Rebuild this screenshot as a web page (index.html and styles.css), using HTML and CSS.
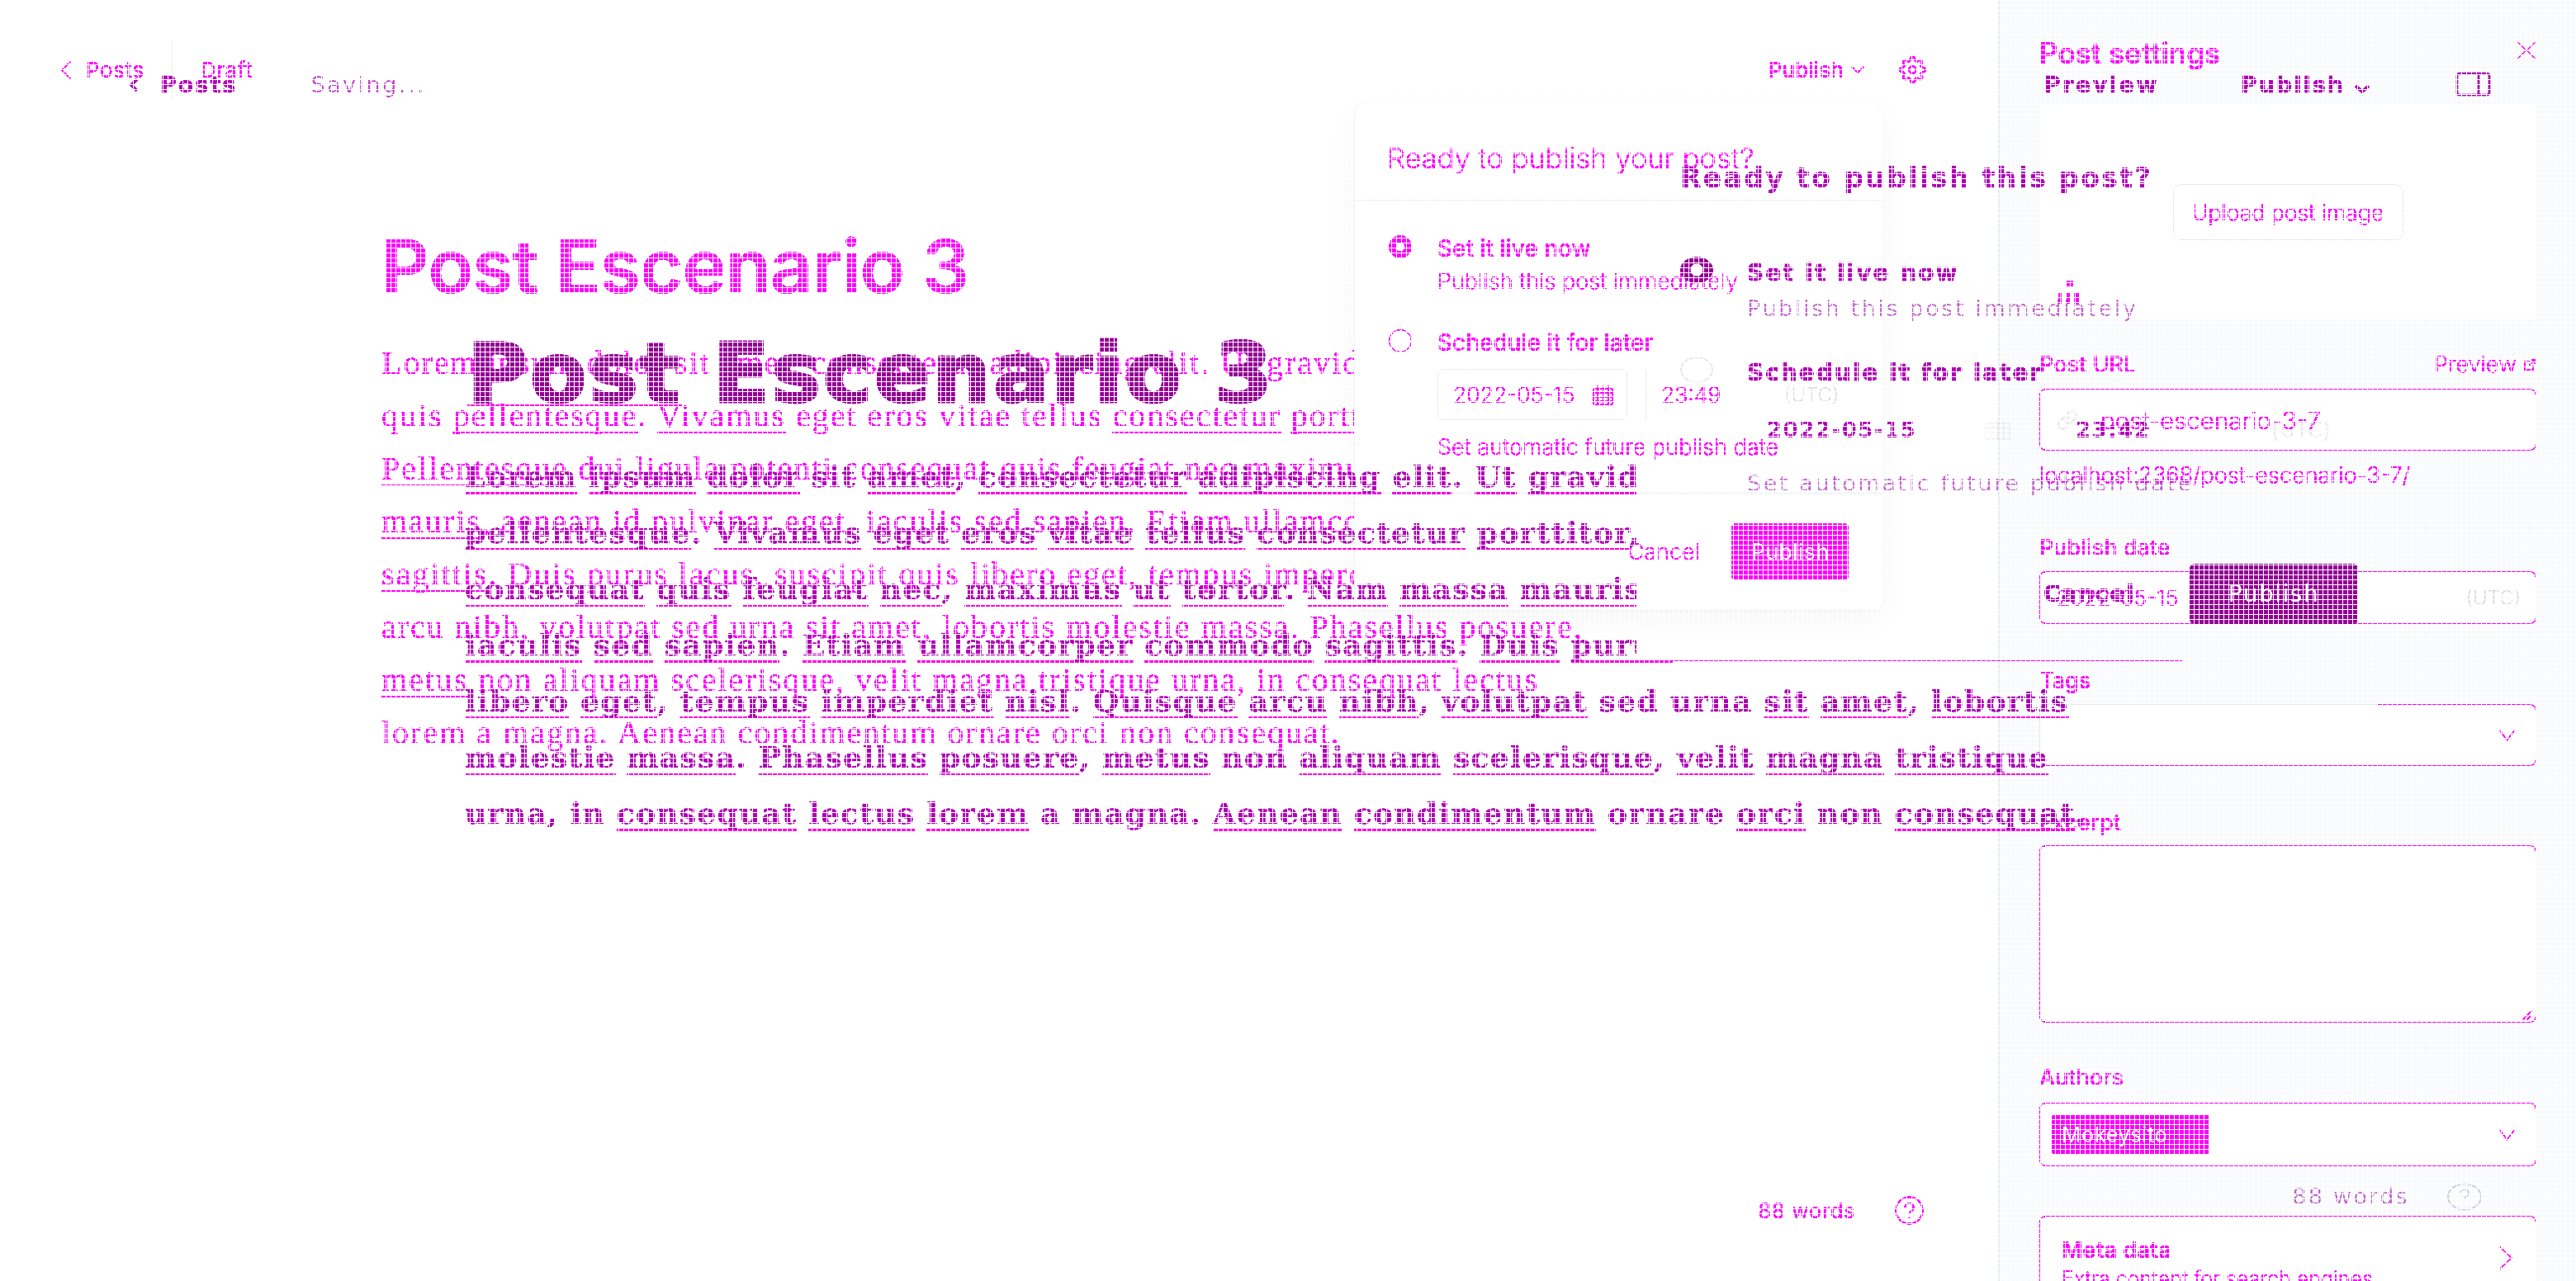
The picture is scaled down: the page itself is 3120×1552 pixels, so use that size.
FILE: index.html
```html
<!DOCTYPE html>
<html lang="en">
<head>
<meta charset="utf-8">
<title>Post Escenario 3</title>
<link rel="stylesheet" href="styles.css">
</head>
<body>
<div class="stage">

  <!-- first capture: magenta -->
  <div class="shot shot-a">
    <main class="a-main">
      <header class="a-top">
        <svg class="a-back" viewBox="0 0 13 22"><path d="M12 1 2 11l10 10"/></svg>
        <span class="a-crumb">Posts</span>
        <span class="a-rule"></span>
        <span class="a-crumb">Draft</span>
        <span class="a-actions">
          <span class="a-publish">Publish</span>
          <svg class="a-caret" viewBox="0 0 16 9"><path d="M1 1l7 7 7-7"/></svg>
          <svg class="a-gear" viewBox="0 0 24 24"><circle cx="12" cy="12" r="3"/><path d="M19.4 15a1.65 1.65 0 0 0 .33 1.82l.06.06a2 2 0 0 1-2.83 2.83l-.06-.06a1.65 1.65 0 0 0-1.82-.33 1.65 1.65 0 0 0-1 1.51V21a2 2 0 0 1-4 0v-.09A1.65 1.65 0 0 0 9 19.4a1.65 1.65 0 0 0-1.82.33l-.06.06a2 2 0 0 1-2.83-2.83l.06-.06a1.65 1.65 0 0 0 .33-1.82 1.65 1.65 0 0 0-1.51-1H3a2 2 0 0 1 0-4h.09A1.65 1.65 0 0 0 4.6 9a1.65 1.65 0 0 0-.33-1.82l-.06-.06a2 2 0 0 1 2.83-2.83l.06.06a1.65 1.65 0 0 0 1.82.33H9a1.65 1.65 0 0 0 1-1.51V3a2 2 0 0 1 4 0v.09a1.65 1.65 0 0 0 1 1.51 1.65 1.65 0 0 0 1.82-.33l.06-.06a2 2 0 0 1 2.83 2.83l-.06.06a1.65 1.65 0 0 0-.33 1.82V9a1.65 1.65 0 0 0 1.51 1H21a2 2 0 0 1 0 4h-.09a1.65 1.65 0 0 0-1.51 1z"/></svg>
        </span>
      </header>
      <article class="a-doc">
        <h1 class="a-title">Post Escenario 3</h1>
        <div class="a-body">
          <div class="line">Lorem ipsum dolor sit amet, consectetur adipiscing elit. Ut gravida nulla</div>
          <div class="line">quis <u>pellentesque</u>. <u>Vivamus</u> eget eros vitae tellus <u>consectetur</u> <u>porttitor</u>, nunc</div>
          <div class="line"><u>Pellentesque</u> dui ligula potenti consequat quis feugiat nec maximus ut</div>
          <div class="line"><u>mauris</u>, aenean id pulvinar eget, iaculis sed sapien. Etiam ullamcorper nunc</div>
          <div class="line"><u>sagittis</u>. Duis purus lacus, suscipit quis libero eget, tempus imperdiet nisl</div>
          <div class="line">arcu nibh, volutpat sed urna sit amet, lobortis molestie massa. Phasellus posuere,</div>
          <div class="line"><u>metus</u> non aliquam scelerisque, velit magna tristique urna, in consequat lectus</div>
          <div class="line">lorem a magna. Aenean condimentum ornare orci non consequat.</div>
        </div>
      </article>
      <footer class="a-foot">
        <span>88 words</span>
        <svg class="a-help" viewBox="0 0 24 24"><circle cx="12" cy="12" r="11"/><path d="M8.5 9.5a3.5 3.5 0 1 1 5 3.2c-1 .5-1.5 1.2-1.5 2.3M12 18v.5"/></svg>
      </footer>

      <section class="a-pop">
        <div class="a-pop-head">Ready to publish your post?</div>
        <div class="a-pop-body">
          <div class="a-opt">
            <span class="a-radio a-radio-on"></span>
            <div>
              <div class="a-opt-name">Set it live now</div>
              <div class="a-opt-note">Publish this post immediately</div>
            </div>
          </div>
          <div class="a-opt a-opt-later">
            <span class="a-radio"></span>
            <div>
              <div class="a-opt-name">Schedule it for later</div>
              <div class="a-when">
                <span class="a-date">2022-05-15
                  <svg class="a-cal" viewBox="0 0 25 25"><path d="M1 5h23v19H1zM1 10h23M1 15h23M1 20h23M6 1v23M12.500 1v23M19 1v23"/></svg>
                </span>
                <span class="a-time">23:49</span>
                <span class="a-utc">(UTC)</span>
              </div>
              <div class="a-opt-note">Set automatic future publish date</div>
            </div>
          </div>
        </div>
        <div class="a-pop-foot">
          <span class="a-cancel">Cancel</span>
          <span class="a-go">Publish</span>
        </div>
      </section>
    </main>

    <aside class="a-side">
      <div class="a-side-head">
        <span>Post settings</span>
        <svg class="a-close" viewBox="0 0 24 22"><path d="M1 1l22 20M23 1 1 21"/></svg>
      </div>
      <div class="a-image">
        <span class="a-upload">Upload post image</span>
        <svg class="a-specks" viewBox="0 0 30 28"><path d="M13 0h8v7h-8zM3 14h4v14H3zM13 14h4v14h-4zM22 14h6v14h-6z"/></svg>
      </div>
      <div class="a-label-row a-url-label"><span class="a-label">Post URL</span>
        <span class="a-preview">Preview
          <svg class="a-ext" viewBox="0 0 16 16"><path d="M1 3h7v2H3v8h8V9h2v6H1zM9 1h6v6h-2V4L8 9 7 8l5-5H9z"/></svg>
        </span>
      </div>
      <div class="a-input a-input-url">
        <svg class="a-link" viewBox="0 0 24 24"><path d="M10 14a5 5 0 0 0 7 0l4-4a5 5 0 0 0-7-7l-2 2M14 10a5 5 0 0 0-7 0l-4 4a5 5 0 0 0 7 7l2-2"/></svg>
        <span>post-escenario-3-7</span>
      </div>
      <div class="a-hint">localhost:2368/post-escenario-3-7/</div>
      <div class="a-label a-date-label">Publish date</div>
      <div class="a-input a-input-date">
        <span>2022-05-15</span>
        <span class="a-utc">(UTC)</span>
      </div>
      <div class="a-label a-tags-label">Tags</div>
      <div class="a-input a-input-tags">
        <svg class="a-down" viewBox="0 0 20 14"><path d="M1 1l9 12 9-12"/></svg>
      </div>
      <div class="a-label a-excerpt-label">Excerpt</div>
      <div class="a-input a-input-excerpt">
        <svg class="a-grip" viewBox="0 0 12 12"><path d="M1 11 11 1M6 11l5-5"/></svg>
      </div>
      <div class="a-label a-authors-label">Authors</div>
      <div class="a-input a-input-authors">
        <span class="a-chip">Mokeysito</span>
        <svg class="a-down" viewBox="0 0 20 14"><path d="M1 1l9 12 9-12"/></svg>
      </div>
      <div class="a-card">
        <div>
          <div class="a-card-name">Meta data</div>
          <div class="a-card-note">Extra content for search engines</div>
        </div>
        <svg class="a-next" viewBox="0 0 16 28"><path d="M1 1l14 13L1 27"/></svg>
      </div>
    </aside>
  </div>

  <!-- second capture: dark purple, multiplied over the first -->
  <div class="shot shot-b">
    <header class="b-top">
      <svg class="b-back" viewBox="0 0 14 18"><path d="M11 2 4 9l7 7"/></svg>
      <span class="b-crumb">Posts</span>
      <span class="b-saving">Saving...</span>
      <span class="b-actions">
        <span class="b-crumb b-preview">Preview</span>
        <span class="b-crumb b-publish">Publish</span>
        <svg class="b-caret" viewBox="0 0 22 12"><path d="M3 2l8 7 8-7"/></svg>
        <svg class="b-panel" viewBox="0 0 43 30"><path d="M5 2h33a3 3 0 0 1 3 3v20a3 3 0 0 1-3 3H5a3 3 0 0 1-3-3V5a3 3 0 0 1 3-3zM28 2v26"/></svg>
      </span>
    </header>
    <h1 class="b-title"><u>Post</u> Escenario 3</h1>
    <div class="b-body">
      <div class="line"><u>Lorem</u> <u>ipsum</u> <u>dolor</u> sit <u>amet</u>, <u>consectetur</u> <u>adipiscing</u> <u>elit</u>. <u>Ut</u> <u>gravida</u> nulla</div>
      <div class="line"><u>pellentesque</u>. <u>Vivamus</u> <u>eget</u> <u>eros</u> <u>vitae</u> <u>tellus</u> <u>consectetur</u> <u>porttitor</u>,</div>
      <div class="line"><u>consequat</u> <u>quis</u> <u>feugiat</u> <u>nec</u>, <u>maximus</u> <u>ut</u> <u>tortor</u>. <u>Nam</u> <u>massa</u> <u>mauris</u>,</div>
      <div class="line"><u>iaculis</u> <u>sed</u> <u>sapien</u>. <u>Etiam</u> <u>ullamcorper</u> <u>commodo</u> <u>sagittis</u>. <u>Duis</u> <u>purus</u> lacus</div>
      <div class="line"><u>libero</u> <u>eget</u>, <u>tempus</u> <u>imperdiet</u> <u>nisl</u>. <u>Quisque</u> <u>arcu</u> <u>nibh</u>, <u>volutpat</u> sed urna <u>sit</u> <u>amet</u>, <u>lobortis</u></div>
      <div class="line"><u>molestie</u> <u>massa</u>. <u>Phasellus</u> <u>posuere</u>, <u>metus</u> non <u>aliquam</u> <u>scelerisque</u>, <u>velit</u> <u>magna</u> <u>tristique</u></div>
      <div class="line">urna, in <u>consequat</u> <u>lectus</u> <u>lorem</u> a magna. <u>Aenean</u> <u>condimentum</u> ornare <u>orci</u> non <u>consequat</u>.</div>
    </div>
    <footer class="b-foot">
      <span>88 words</span>
      <svg class="b-help" viewBox="0 0 44 34"><ellipse cx="22" cy="17" rx="20" ry="15.500"/><path d="M17 12a5 4.500 0 1 1 8 4c-2 1-3 2-3 4M22 25v1"/></svg>
    </footer>

    <section class="b-pop">
      <div class="b-pop-title">Ready to publish this post?</div>
      <div class="b-opt">
        <span class="b-radio b-radio-on"></span>
        <div>
          <div class="b-opt-name">Set it live now</div>
          <div class="b-opt-note">Publish this post immediately</div>
        </div>
      </div>
      <div class="b-opt b-opt-later">
        <span class="b-radio"></span>
        <div>
          <div class="b-opt-name">Schedule it for later</div>
          <div class="b-when">
            <span class="b-date">2022-05-15</span>
            <svg class="b-cal" viewBox="0 0 31 24"><path d="M1 4h29v19H1zM1 9h29M1 14h29M8 1v22M15.500 1v22M23 1v22"/></svg>
            <span class="b-date b-time">23:42</span>
            <span class="b-utc">(UTC)</span>
          </div>
          <div class="b-opt-note b-auto">Set automatic future publish date</div>
        </div>
      </div>
      <div class="b-pop-foot">
        <span class="b-cancel">Cancel</span>
        <span class="b-go">Publish</span>
      </div>
    </section>
  </div>

  <div class="grid"></div>

  <svg class="defs" aria-hidden="true">
    <filter id="crisp" x="0" y="0" width="100%" height="100%" color-interpolation-filters="sRGB">
      <feComponentTransfer>
        <feFuncG type="table" tableValues="0 0 0 0 0 0 0 0 0 0 0 0 0 0 0 0 0.4 0.85 0.9 0.95 1"/>
      </feComponentTransfer>
    </filter>
    <filter id="ink" x="0" y="0" width="100%" height="100%" color-interpolation-filters="sRGB">
      <feComponentTransfer>
        <feFuncR type="table" tableValues="0.55 0.58 0.68 0.72 0.76 0.8 0.84 0.87 0.9 0.95 1"/>
        <feFuncG type="table" tableValues="0 0 0 0 0.08 0.3 0.62 0.82 0.88 0.95 1"/>
        <feFuncB type="table" tableValues="0.55 0.58 0.68 0.72 0.76 0.8 0.84 0.87 0.9 0.95 1"/>
      </feComponentTransfer>
    </filter>
  </svg>
</div>
</body>
</html>
```

FILE: styles.css
```css
html, body { margin: 0; padding: 0; overflow: hidden; background: #fff; }
.stage { position: relative; width: 3120px; height: 1552px; overflow: hidden; isolation: isolate; }
.shot { position: absolute; inset: 0; background: #fff; overflow: hidden; }
.defs { position: absolute; width: 0; height: 0; }
.grid {
  position: absolute; inset: 0; pointer-events: none;
  background-image:
    repeating-linear-gradient(to right, transparent 0 5px, #fff 5px 6px),
    repeating-linear-gradient(to bottom, #fff 0 1px, transparent 1px 6px);
}
.line { white-space: nowrap; }
svg { fill: none; flex: none; }

/* ---------- capture A ---------- */
.shot-a {
  display: flex; filter: url(#crisp);
  font-family: Inter, "Liberation Sans", sans-serif; color: #f0f; font-size: 27px;
}
.shot-a svg { stroke: #f0f; }
.a-main { position: relative; width: 2420px; display: flex; flex-direction: column; }
.a-top { height: 169px; display: flex; align-items: center; padding: 0 87px 0 73px; box-sizing: border-box; }
.a-back { width: 13px; height: 22px; stroke-width: 1.5; margin-right: 18px; }
.a-crumb { font-size: 26px; letter-spacing: .6px; }
.a-rule { width: 2px; height: 71px; background: #e5ecf3; margin: 0 33px 0 33px; }
.a-actions { margin-left: auto; display: flex; align-items: center; }
.a-publish { font-size: 26px; font-weight: 500; }
.a-caret { width: 16px; height: 9px; stroke-width: 1.5; margin-left: 9px; }
.a-gear { width: 33px; height: 33px; stroke-width: 1.6; margin-left: 42px; }
.a-doc { padding: 104px 0 0 462px; }
.a-title { margin: 0; font-size: 90px; line-height: 100px; font-weight: 600; letter-spacing: -1px; }
.a-body {
  margin-top: 35px;
  font-family: "Liberation Serif", serif; font-size: 40px; line-height: 64px; letter-spacing: 2px;
}
.a-body u { text-decoration: underline solid #f0f 2px; text-decoration-skip-ink: none; text-underline-offset: 6px; }
.a-foot { margin-top: auto; padding: 0 90px 68px 0; display: flex; justify-content: flex-end; align-items: center; gap: 48px; font-size: 25.500px; letter-spacing: .6px; }
.a-help { width: 35px; height: 35px; stroke-width: 1.2; }

.a-pop {
  position: absolute; left: 1640px; top: 126px; width: 640px; height: 614px; box-sizing: border-box;
  background: #fff; border: 1px solid #eef2f6; border-radius: 10px;
  box-shadow: 0 10px 34px rgba(0, 0, 0, .05);
  display: flex; flex-direction: column;
}
.a-pop-head { height: 116px; padding: 41px 39px 0; box-sizing: border-box; border-bottom: 1px solid #e5ecf3; font-size: 34.500px; line-height: 48px; font-weight: 300; }
.a-pop-body { flex: 1; padding: 40px 41px 0; box-sizing: border-box; border-bottom: 1px solid #e5ecf3; }
.a-opt { display: flex; gap: 31px; }
.a-opt-later { margin-top: 38px; }
.a-radio { width: 28px; height: 28px; box-sizing: border-box; border: 1px solid #f0f; border-radius: 50%; margin-top: 2px; }
.a-radio-on { background: radial-gradient(circle, #fff 0 5px, #f0f 6px); }
.a-opt-name { font-size: 28px; font-weight: 500; line-height: 36px; }
.a-opt-note { font-size: 27px; font-weight: 300; line-height: 36px; margin-top: 4px; }
.a-when { display: flex; align-items: center; margin: 14px 0 15px; font-size: 26.500px; font-weight: 300; }
.a-date { width: 230px; height: 62px; box-sizing: border-box; border: 1px solid #e3e9ef; border-radius: 8px; display: flex; align-items: center; justify-content: space-between; padding: 0 16px 0 18px; }
.a-cal { width: 25px; height: 25px; stroke-width: 1; }
.a-time { width: 150px; height: 62px; box-sizing: border-box; margin-left: 22px; padding-left: 18px; display: flex; align-items: center; border-left: 1px solid #e3e9ef; }
.a-utc { margin-left: 18px; color: #d9d9d9; font-size: 24px; font-weight: 300; }
.a-pop-foot { height: 141px; display: flex; align-items: center; justify-content: flex-end; padding: 0 40px 0 0; box-sizing: border-box; }
.a-cancel { font-size: 27px; margin-right: 38px; font-weight: 300; }
.a-go { width: 142px; height: 69px; border-radius: 6px; background: #f0f; color: #fff; display: flex; align-items: center; justify-content: center; font-size: 27px; font-weight: 500; }

.a-side { width: 700px; box-sizing: border-box; background: #f8fafc; border-left: 2px solid #e5ecf3; padding: 0 48px; }
.a-side-head { height: 126px; box-sizing: border-box; padding-top: 44px; display: flex; justify-content: space-between; align-items: flex-start; font-size: 35px; line-height: 40px; font-weight: 600; }
.a-close { width: 24px; height: 22px; stroke-width: 1; margin-top: 6px; }
.a-image { position: relative; height: 261px; background: #fff; display: flex; align-items: center; justify-content: center; }
.a-upload { width: 279px; height: 68px; box-sizing: border-box; border: 1px solid #e0e6ec; border-radius: 10px; display: flex; align-items: center; justify-content: center; font-size: 26.600px; font-weight: 300; }
.a-specks { position: absolute; left: 20px; bottom: 19px; width: 30px; height: 28px; fill: #f0f; stroke: none !important; }
.a-label { font-size: 27px; font-weight: 500; line-height: 30px; }
.a-label-row { display: flex; justify-content: space-between; }
.a-url-label { margin-top: 40px; }
.a-preview { font-size: 27px; font-weight: 300; line-height: 30px; display: flex; align-items: center; gap: 8px; }
.a-ext { width: 16px; height: 16px; fill: #f0f !important; stroke: none !important; }
.a-input { position: relative; box-sizing: border-box; background: #fff; border: 1px solid #f0f; border-radius: 8px; display: flex; align-items: center; }
.a-input-url { height: 75px; margin-top: 14px; padding: 0 20px; gap: 27px; font-size: 29.500px; font-weight: 300; }
.a-link { width: 26px; height: 26px; stroke: #e3e3e3 !important; stroke-width: 2; }
.a-hint { margin-top: 15px; font-size: 27px; font-weight: 300; line-height: 30px; }
.a-date-label { margin-top: 58px; }
.a-input-date { height: 64px; margin-top: 13px; padding: 0 18px 0 20px; justify-content: space-between; font-size: 26.500px; font-weight: 300; }
.a-tags-label { margin-top: 54px; }
.a-input-tags { height: 75px; margin-top: 13px; justify-content: flex-end; padding-right: 25px; }
.a-input-tags::before { content: ""; position: absolute; left: -1px; top: -1px; width: 408px; height: 60px; border-top: 1px solid #dfe5eb; border-left: 1px solid #dfe5eb; border-top-left-radius: 8px; }
.a-down { width: 19px; height: 14px; stroke-width: 1.2; }
.a-excerpt-label { margin-top: 54px; }
.a-input-excerpt { height: 215px; margin-top: 12px; }
.a-grip { position: absolute; right: 4px; bottom: 2px; width: 12px; height: 12px; stroke-width: 1.6; }
.a-authors-label { margin-top: 52px; }
.a-input-authors { height: 77px; margin-top: 15px; padding: 0 25px 0 14px; justify-content: space-between; }
.a-chip { width: 191px; height: 47px; box-sizing: border-box; padding-left: 12px; background: #f0f; color: #fff; border-radius: 4px; display: flex; align-items: center; font-size: 26px; font-weight: 500; }
.a-card { margin-top: 60px; height: 120px; box-sizing: border-box; background: #fff; border: 1px solid #f0f; border-radius: 8px; padding: 22px 28px 0 26px; display: flex; justify-content: space-between; align-items: flex-start; }
.a-card-name { font-size: 27.500px; font-weight: 600; line-height: 36px; }
.a-card-note { font-size: 25px; font-weight: 300; line-height: 30px; margin-top: 2px; }
.a-next { width: 16px; height: 28px; stroke-width: 1.2; margin-top: 14px; }

/* ---------- capture B ---------- */
.shot-b {
  mix-blend-mode: multiply; filter: url(#ink);
  font-family: "DejaVu Sans", sans-serif; color: #394047;
}
.shot-b svg { stroke: #394047; }
.shot-b u { text-decoration: underline solid rgb(255, 0, 200) 3px; text-decoration-skip-ink: none; text-underline-offset: 6px; }
.b-top { height: 393px; box-sizing: border-box; padding: 80px 103px 0 155px; display: flex; align-items: flex-start; line-height: 46px; }
.b-back { width: 14px; height: 18px; stroke-width: 4; margin: 14px 25px 0 0; }
.b-crumb { font-size: 27px; font-weight: 700; letter-spacing: 2px; color: #4a4a52; -webkit-text-stroke: .8px #4a4a52; }
.b-preview { letter-spacing: 2.500px; }
.b-saving { margin-left: 89px; font-size: 27px; letter-spacing: 2.500px; color: #6e7a85; }
.b-actions { margin-left: auto; display: flex; align-items: flex-start; }
.b-publish { margin-left: 99px; }
.b-caret { width: 22px; height: 12px; stroke-width: 4; margin: 22px 0 0 10px; }
.b-panel { width: 43px; height: 30px; stroke-width: 3; margin: 7px 0 0 102px; }
.b-title { margin: 0; padding-left: 566px; font-size: 100px; line-height: 120px; font-weight: 700; letter-spacing: 2.700px; color: #15171a; white-space: nowrap; -webkit-text-stroke: 3px #15171a; }
.b-title u { text-underline-offset: 3px; }
.b-body { margin-top: 30px; padding-left: 563px; font-family: "DejaVu Serif", serif; font-weight: 700; font-size: 36px; line-height: 68px; letter-spacing: 1.300px; -webkit-text-stroke: .5px #394047; }
.b-foot { margin-top: 411px; padding-right: 113px; display: flex; justify-content: flex-end; align-items: center; gap: 45px; font-size: 27px; letter-spacing: 2.300px; color: #7a858f; line-height: 40px; }
.b-help { width: 44px; height: 34px; stroke-width: 2; stroke: #a9b1b8 !important; }

.b-pop { position: absolute; left: 1982px; top: 150px; width: 918px; height: 651px; box-sizing: border-box; background: #fff; padding: 42px 0 0 53px; }
.b-pop::after { content: ""; position: absolute; left: 0; bottom: 0; width: 661px; height: 1px; background: #f0f; }
.b-pop-title { font-size: 33px; font-weight: 700; letter-spacing: 2.400px; line-height: 48px; -webkit-text-stroke: .5px #394047; }
.b-opt { margin-top: 71px; display: flex; gap: 41px; }
.b-opt-later { margin-top: 38px; }
.b-radio { width: 40px; height: 32px; box-sizing: border-box; border: 2px solid #cfd4d8; border-radius: 50%; }
.b-radio-on { border: 0; background: radial-gradient(circle, #fff 0 7px, #15171a 8px); }
.b-opt-name { font-size: 28px; font-weight: 700; letter-spacing: 2px; line-height: 40px; -webkit-text-stroke: 1px #394047; }
.b-opt-note { font-size: 27px; letter-spacing: 2.600px; line-height: 40px; color: #7a858f; margin-top: 3px; white-space: nowrap; }
.b-when { display: flex; align-items: center; height: 40px; margin: 29px 0 0 24px; white-space: nowrap; }
.b-date { font-size: 26px; font-weight: 700; letter-spacing: 1.500px; width: 264px; }
.b-cal { width: 31px; height: 24px; stroke-width: 1; stroke: #cfd4d8 !important; }
.b-time { width: 237px; margin-left: 79px; }
.b-utc { font-size: 26px; color: #cfd4d8; }
.b-auto { margin-top: 25px; white-space: nowrap; }
.b-pop-foot { position: absolute; left: 493px; top: 533px; display: flex; align-items: center; }
.b-cancel { width: 177px; font-size: 28px; font-weight: 700; letter-spacing: 1px; -webkit-text-stroke: .6px #394047; }
.b-go { width: 204px; height: 73px; border-radius: 6px; background: #15171a; color: #fff; display: flex; align-items: center; justify-content: center; font-size: 28px; letter-spacing: 1.500px; }
```
